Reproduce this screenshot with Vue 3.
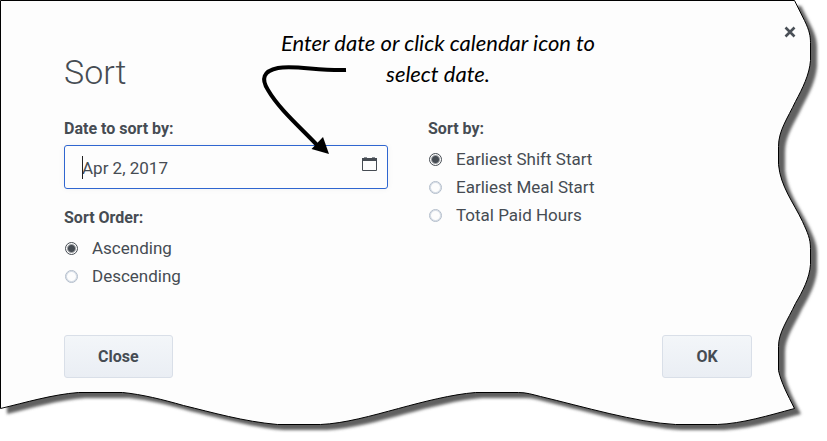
<script setup>
import { ref } from 'vue'

const date = ref('Apr 2, 2017')
const order = ref('Ascending')
const sortBy = ref('Earliest Shift Start')
const orders = ['Ascending', 'Descending']
const criteria = ['Earliest Shift Start', 'Earliest Meal Start', 'Total Paid Hours']

const edge =
  'M0 0H794L804 20C809 30 810 36 810 42V60C809 74 802 88 795 101C787 118 778 130 778 146V164C780 186 793 202 802 221C807 232 810 238 810 248V264C809 278 802 291 795 303C787 320 778 332 778 346V370C781 383 787 394 794 408C768 415 742 423 717 424H675C636 422 582 406 540 396C532 394 526 392 518 392H475C451 394 424 401 398 408C372 415 344 423 320 424H277C243 421 212 412 183 405C162 399 142 394 122 392H78C52 394 25 402 0 408Z'
</script>

<template>
  <main class="dialog">
    <svg class="paper" viewBox="0 0 827 441" preserveAspectRatio="none" aria-hidden="true">
      <defs>
        <filter id="soft" x="-5%" y="-5%" width="110%" height="110%">
          <feGaussianBlur stdDeviation="1.5" />
        </filter>
      </defs>
      <g filter="url(#soft)">
        <path :d="edge" transform="translate(7 6)" fill="#606060" />
      </g>
      <path :d="edge" transform="translate(.5 .5)" fill="#fdfdfd" stroke="#000" />
    </svg>

    <button class="dismiss" type="button" aria-label="Dismiss">
      <svg width="12" height="12" viewBox="0 0 12 12"><path d="M1.500 1.500l9 9M10.500 1.500l-9 9" fill="none" stroke="#4a5057" stroke-width="2.600" /></svg>
    </button>

    <h1>Sort</h1>

    <form class="form" @submit.prevent>
      <div class="columns">
        <div class="column">
          <label class="heading" for="date">Date to sort by:</label>
          <div class="field">
            <input id="date" v-model="date" class="date" type="text" />
            <span class="caret"></span>
            <button class="calendar" type="button" aria-label="Choose date">
              <svg width="15" height="15" viewBox="0 0 15 15">
                <path d="M.5 2.500h14v12H.5z" fill="none" stroke="#464c53" />
                <path d="M0 2h2v1h3V2h5v1h3V2h2v3H0z" fill="#464c53" />
                <path d="M2 1h3v1H2zM10 1h3v1h-3z" fill="#8a8f95" />
              </svg>
            </button>
          </div>
          <fieldset class="order">
            <legend class="heading">Sort Order:</legend>
            <label v-for="item in orders" :key="item" class="option">
              <input v-model="order" type="radio" name="order" :value="item" />
              <span>{{ item }}</span>
            </label>
          </fieldset>
        </div>
        <fieldset class="column">
          <legend class="heading">Sort by:</legend>
          <label v-for="item in criteria" :key="item" class="option">
            <input v-model="sortBy" type="radio" name="criteria" :value="item" />
            <span>{{ item }}</span>
          </label>
        </fieldset>
      </div>
      <div class="actions">
        <button class="action" type="button">Close</button>
        <button class="action" type="submit">OK</button>
      </div>
    </form>

    <p class="note">Enter date or click calendar icon to<br />select date.</p>
    <svg class="arrow" width="90" height="100" viewBox="0 0 90 100" aria-hidden="true">
      <path d="M86 10C58 11 35 5 18 8C3 11 1 19 8 30C19 49 40 67 58 86" fill="none" stroke="#000" stroke-width="4" />
      <path d="M69 94L51.500 89L63 77Z" fill="#000" />
    </svg>
  </main>
</template>

<style>
body {
  background: #fff;
}
</style>

<style scoped>
.dialog {
  position: relative;
  box-sizing: border-box;
  padding: 48px 75px 63px 64px;
  color: #464c53;
  font: 17px/28px Roboto, sans-serif;
}
.paper {
  position: absolute;
  inset: 0;
  width: 100%;
  height: 100%;
}
h1 {
  position: relative;
  margin: 0 0 21px;
  font-size: 34px;
  font-weight: 300;
  line-height: 48px;
}
.form {
  position: relative;
}
.columns {
  display: grid;
  grid-template-columns: 1fr 1fr;
  gap: 40px;
}
fieldset {
  min-width: 0;
  margin: 0;
  padding: 0;
  border: 0;
}
.heading {
  display: block;
  margin-bottom: 4px;
  padding: 0;
  font-size: 16px;
  font-weight: 700;
  line-height: 24px;
}
.field {
  position: relative;
  margin-bottom: 17px;
}
.date {
  display: block;
  box-sizing: border-box;
  width: 100%;
  height: 44px;
  padding: 2px 48px 0 17px;
  border: 1px solid #2f66d0;
  border-radius: 3px;
  outline: 0;
  background: #fdfdfd;
  box-shadow: 0 0 6px #0000000d;
  color: inherit;
  font: inherit;
}
.caret {
  position: absolute;
  top: 11px;
  left: 18px;
  width: 1px;
  height: 23px;
  background: #222;
}
.calendar,
.dismiss {
  position: absolute;
  display: flex;
  padding: 0;
  border: 0;
  background: none;
  cursor: pointer;
}
.calendar {
  top: 11px;
  right: 11px;
}
.dismiss {
  top: 26px;
  right: 31px;
}
.option {
  display: flex;
  align-items: center;
  gap: 14px;
}
.option input {
  appearance: none;
  box-sizing: border-box;
  width: 13px;
  height: 13px;
  margin: 0 0 0 1px;
  border: 1px solid #b3bdcb;
  border-radius: 50%;
  box-shadow: inset 0 0 0 1px #d5dce5;
}
.option input:checked {
  border-color: #464c53;
  background: radial-gradient(circle, #464c53 3px, #464c5388 4px, transparent 5px);
  box-shadow: none;
}
.actions {
  display: flex;
  justify-content: space-between;
  margin-top: 45px;
}
.action {
  min-width: 90px;
  height: 43px;
  padding: 1px 33px 0;
  border: 1px solid #d9dfe8;
  border-radius: 3px;
  background: linear-gradient(#f3f6f9, #eaeef4);
  color: inherit;
  font: 700 16px/28px Roboto, sans-serif;
}
.note {
  position: absolute;
  top: 27px;
  left: 258px;
  width: 360px;
  margin: 0;
  color: #000;
  font: italic 22px/31px Lato, sans-serif;
  text-align: center;
}
.arrow {
  position: absolute;
  top: 60px;
  left: 260px;
}
</style>
